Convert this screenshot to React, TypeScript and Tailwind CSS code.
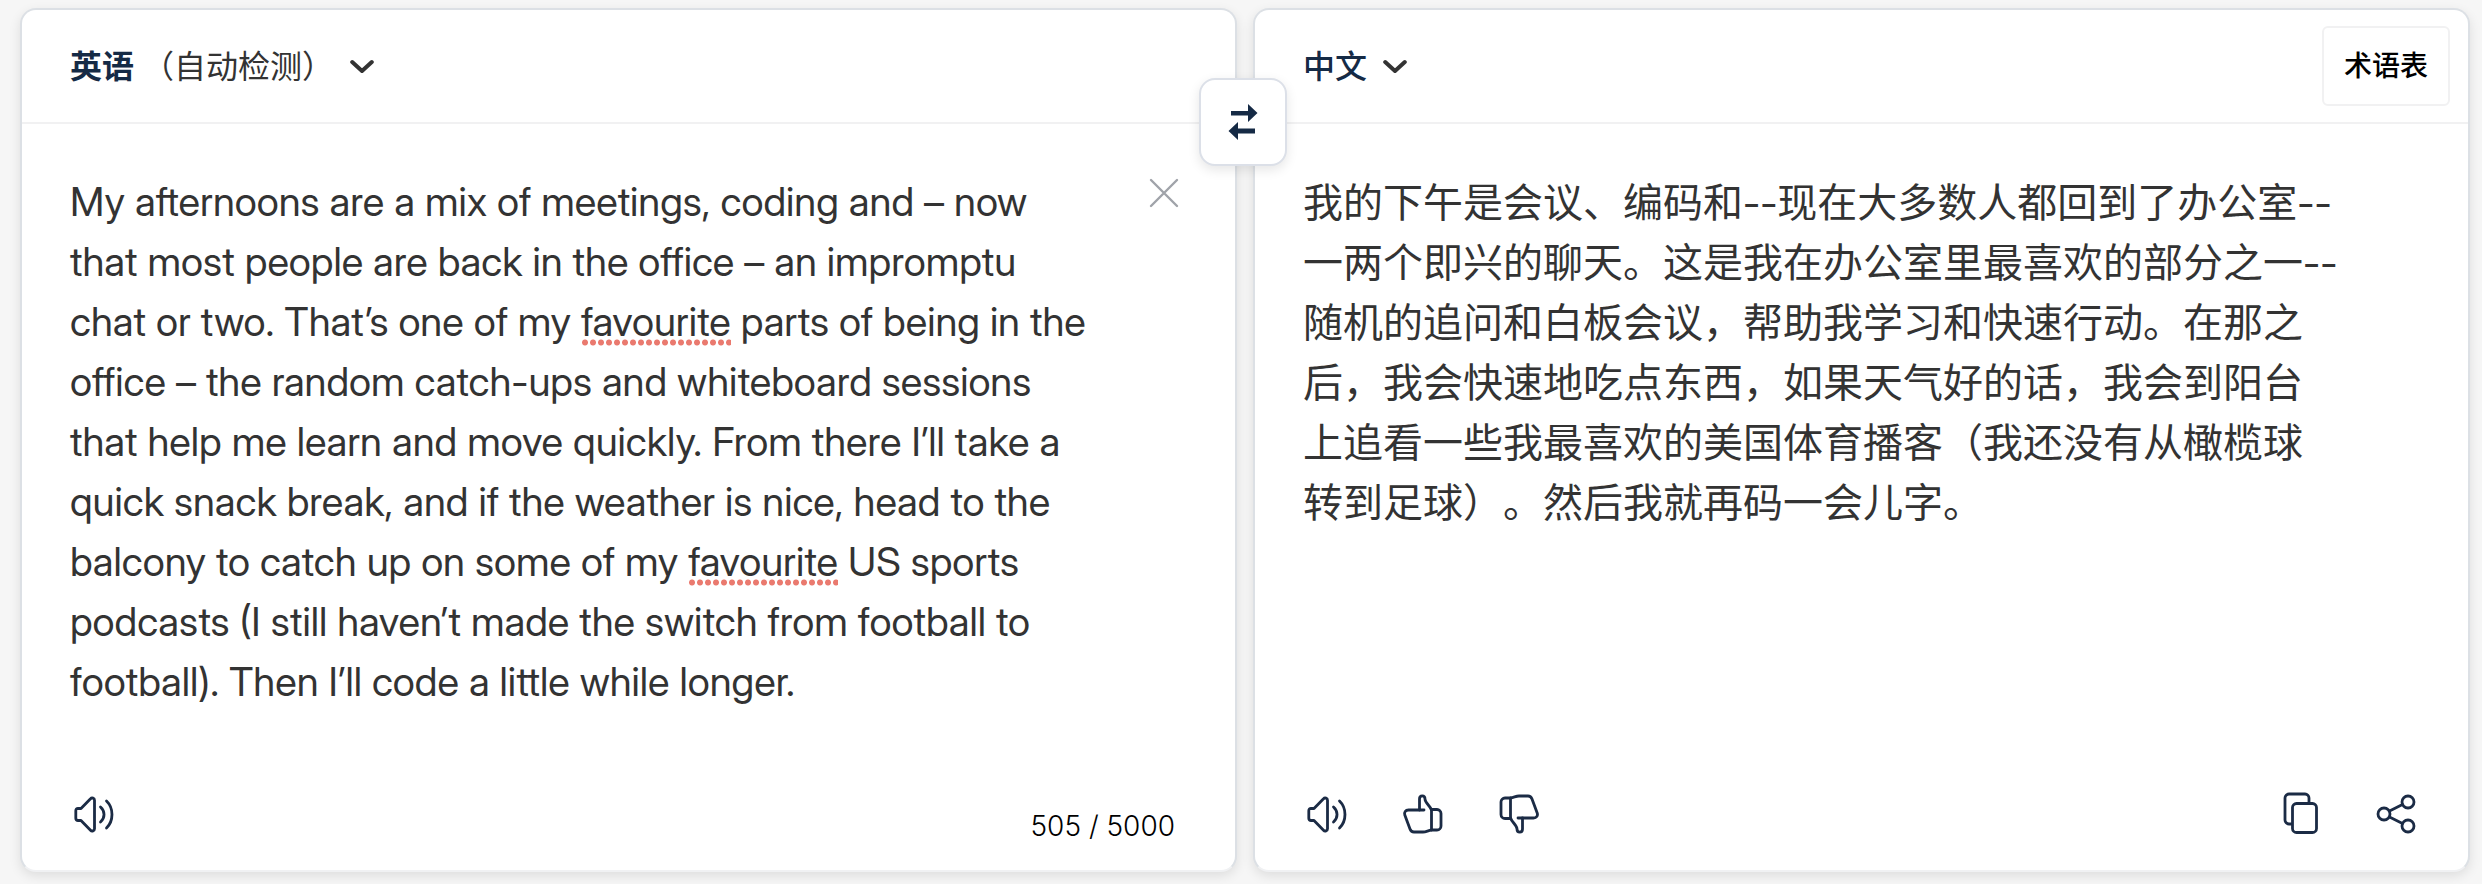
import type { ReactNode } from "react";

const sourceLines: ReactNode[] = [
  "My afternoons are a mix of meetings, coding and – now",
  "that most people are back in the office – an impromptu",
  <>chat or two. That’s one of my <Misspelt>favourite</Misspelt> parts of being in the</>,
  "office – the random catch-ups and whiteboard sessions",
  "that help me learn and move quickly. From there I’ll take a",
  "quick snack break, and if the weather is nice, head to the",
  <>balcony to catch up on some of my <Misspelt>favourite</Misspelt> US sports</>,
  "podcasts (I still haven’t made the switch from football to",
  "football). Then I’ll code a little while longer.",
];

const targetLines = [
  "我的下午是会议、编码和--现在大多数人都回到了办公室--",
  "一两个即兴的聊天。这是我在办公室里最喜欢的部分之一--",
  "随机的追问和白板会议，帮助我学习和快速行动。在那之",
  "后，我会快速地吃点东西，如果天气好的话，我会到阳台",
  "上追看一些我最喜欢的美国体育播客（我还没有从橄榄球",
  "转到足球）。然后我就再码一会儿字。",
];

function Misspelt({ children }: { children: ReactNode }) {
  return (
    <span className="bg-[radial-gradient(circle,#ea7a6f_2.5px,transparent_3.5px)] bg-[length:8px_7px] bg-[position:left_bottom] bg-repeat-x">
      {children}
    </span>
  );
}

function Svg({ children, className = "size-10" }: { children: ReactNode; className?: string }) {
  return (
    <svg
      viewBox="0 0 40 40"
      className={className}
      fill="none"
      stroke="currentColor"
      strokeWidth="2.8"
      strokeLinecap="round"
      strokeLinejoin="round"
      overflow="visible"
      aria-hidden="true"
    >
      {children}
    </svg>
  );
}

function Speaker() {
  return (
    <Svg>
      <path d="M4 14.5h3L16.5 4.8c1.4-1.5 4-.7 4 1.5v28.4c0 2.2-2.6 3-4 1.5L7 26.5H4c-1.4 0-2.2-.8-2.2-2.2v-7.6c0-1.4.8-2.2 2.2-2.2z" />
      <path d="M26.5 13c4.7 4.2 4.7 10.8 0 15M32.5 7c7.3 7 7.3 20 0 27" />
    </Svg>
  );
}

function Thumb({ down = false }: { down?: boolean }) {
  return (
    <Svg className={down ? "size-10 rotate-180" : "size-10"}>
      <path d="M21 16H5.5c-3 0-4.6 2.5-3.7 5l5.2 14c.8 2.2 2 3 4 3H20c3 0 5-1.5 8.5-2" />
      <path d="M16.5 16V5c0-4.2 5.5-4.2 5.5 0 0 4 5 6.5 6.5 11" />
      <path d="M28.5 15.5H34a4 4 0 0 1 4 4V32a4 4 0 0 1-4 4h-5.5z" />
    </Svg>
  );
}

function Chevron() {
  return (
    <svg viewBox="0 0 24 16" className="h-4 w-6" fill="none" stroke="#333" strokeWidth="4" strokeLinecap="round" aria-hidden="true">
      <path d="M2.2 3l9.8 9 9.8-9" strokeLinejoin="round" />
    </svg>
  );
}

function IconButton({ label, children }: { label: string; children: ReactNode }) {
  return (
    <button type="button" aria-label={label} className="text-[#1b2b45]">
      {children}
    </button>
  );
}

function Panel({ label, children }: { label: string; children: ReactNode }) {
  return (
    <section
      aria-label={label}
      className="flex min-w-0 flex-1 flex-col rounded-2xl border-2 border-[#dce0e5] border-b-[#f0f1f3] bg-white shadow-[0_4px_12px_rgba(0,0,0,0.1)]"
    >
      {children}
    </section>
  );
}

export default function App() {
  return (
    <main className="min-h-screen bg-[#f6f6f6] pt-2 pr-3 pb-3 pl-5 font-['Inter','Noto_Sans_CJK_SC',sans-serif] text-[#333]">
      <div className="relative flex min-h-[calc(100vh-20px)] gap-4">
        <Panel label="原文">
          <header className="flex h-[114px] items-center justify-between border-b-2 border-[#f1f1f2] pl-12">
            <button type="button" className="flex items-center pt-0.5 text-[32px] leading-10">
              <span className="font-bold text-[#152a45]">英语</span>
              <span className="ml-2">（自动检测）</span>
              <span className="ml-4"><Chevron /></span>
            </button>
          </header>
          <div className="flex flex-1 items-start justify-between pt-12 pr-14 pl-12">
            <div
              role="textbox"
              aria-label="原文文本"
              aria-multiline="true"
              lang="en"
              contentEditable
              suppressContentEditableWarning
              spellCheck={false}
              className="font-['Inter_Display','Inter',sans-serif] text-[40px] leading-[60px] outline-none"
            >
              {sourceLines.map((line, i) => (
                <div key={i} className="whitespace-nowrap">{line}</div>
              ))}
            </div>
            <button type="button" aria-label="清除文本" className="mt-1.5 text-[#a0a3a9]">
              <svg viewBox="0 0 30 30" className="size-[30px]" fill="none" stroke="currentColor" strokeWidth="2.4" strokeLinecap="round" aria-hidden="true">
                <path d="M2 2l26 26M28 2L2 28" />
              </svg>
            </button>
          </div>
          <footer className="flex items-start justify-between pr-15 pb-6 pl-13">
            <IconButton label="朗读原文"><Speaker /></IconButton>
            <span className="pt-3 text-[28px] leading-10 font-light text-black">505 / 5000</span>
          </footer>
        </Panel>

        <Panel label="译文">
          <header className="flex h-[114px] items-center justify-between border-b-2 border-[#f1f1f2] pr-[18px] pl-12">
            <button type="button" className="flex items-center gap-4 pt-0.5 text-[32px] leading-10">
              <span className="font-medium text-[#152a45]">中文</span>
              <Chevron />
            </button>
            <button type="button" className="h-20 rounded-md border-2 border-[#f1f1f2] px-5 text-[28px] leading-10 font-medium text-black">
              术语表
            </button>
          </header>
          <div
            lang="zh-CN"
            className="flex-1 pt-[49px] pl-12 font-['Inter_Display','Noto_Sans_CJK_SC',sans-serif] text-[40px] leading-[60px] [text-spacing-trim:space-all]"
          >
            {targetLines.map((line) => (
              <p key={line} className="whitespace-nowrap">{line}</p>
            ))}
          </div>
          <footer className="flex items-center justify-between pr-13 pb-9 pl-13">
            <div className="flex gap-14">
              <IconButton label="朗读译文"><Speaker /></IconButton>
              <IconButton label="赞"><Thumb /></IconButton>
              <IconButton label="踩"><Thumb down /></IconButton>
            </div>
            <div className="flex gap-14">
              <IconButton label="复制">
                <Svg>
                  <path d="M11.5 30H9a4 4 0 0 1-4-4V4a4 4 0 0 1 4-4h16a4 4 0 0 1 4 4v5" />
                  <rect x="12.5" y="9.5" width="24" height="29" rx="4" />
                </Svg>
              </IconButton>
              <IconButton label="分享">
                <Svg>
                  <circle cx="8" cy="20" r="6" />
                  <circle cx="32" cy="8" r="6" />
                  <circle cx="32" cy="32" r="6" />
                  <path d="M13.5 17l13-6.5M13.5 23l13 6.5" />
                </Svg>
              </IconButton>
            </div>
          </footer>
        </Panel>

        <button
          type="button"
          aria-label="交换语言"
          className="absolute top-[70px] left-[calc(50%-46px)] flex size-22 items-center justify-center rounded-2xl border-2 border-[#dce0e8] bg-white text-[#152a45] shadow-[0_4px_12px_rgba(0,0,0,0.1)]"
        >
          <svg viewBox="0 0 30 36" className="h-9 w-[30px]" fill="currentColor" aria-hidden="true">
            <path d="M3 7h17V0l9.5 9-9.5 9v-6.5H3zM27 24.5H10V18L.5 27l9.5 9v-6.5h17z" />
          </svg>
        </button>
      </div>
    </main>
  );
}
